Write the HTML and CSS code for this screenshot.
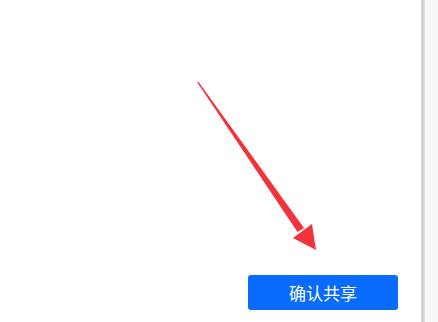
FILE: index.html
```html
<!DOCTYPE html>
<html lang="zh">
<head>
<meta charset="utf-8">
<link rel="stylesheet" href="styles.css">
</head>
<body>
<div class="page">
  <main class="content">
    <div class="actions">
      <button class="confirm">确认共享</button>
    </div>
  </main>
  <div class="divider"></div>
  <aside class="side"></aside>
</div>
<svg class="arrow" width="438" height="322" viewBox="0 0 438 322">
  <polygon points="197,82 198.6,82 304,228 297.5,232" fill="#f3333b"/>
  <polygon points="316,250 293,238 312,224" fill="#f3333b"/>
</svg>
</body>
</html>
```
FILE: styles.css
```css
html, body {
  margin: 0;
  padding: 0;
  background: #ffffff;
  font-family: "Noto Sans CJK SC", "Liberation Sans", sans-serif;
}
.page {
  display: flex;
  width: 438px;
  height: 322px;
  overflow: hidden;
}
.content {
  flex: 0 0 421px;
  display: flex;
  flex-direction: column;
  justify-content: flex-end;
  background: #ffffff;
}
.actions {
  display: flex;
  padding: 0 0 12px 248px;
}
.confirm {
  width: 150px;
  height: 35px;
  border: none;
  border-radius: 3px;
  background: #0a6cff;
  color: #ffffff;
  font-family: "Noto Sans CJK SC", sans-serif;
  font-size: 17px;
  padding: 0;
}
.divider {
  flex: 0 0 4px;
  background: linear-gradient(to right, #dcdcdc, #cfcfcf 50%, #e6e6e6);
}
.side {
  flex: 1;
  background: #f7f7f7;
}
.arrow {
  position: absolute;
  left: 0;
  top: 0;
}
```
